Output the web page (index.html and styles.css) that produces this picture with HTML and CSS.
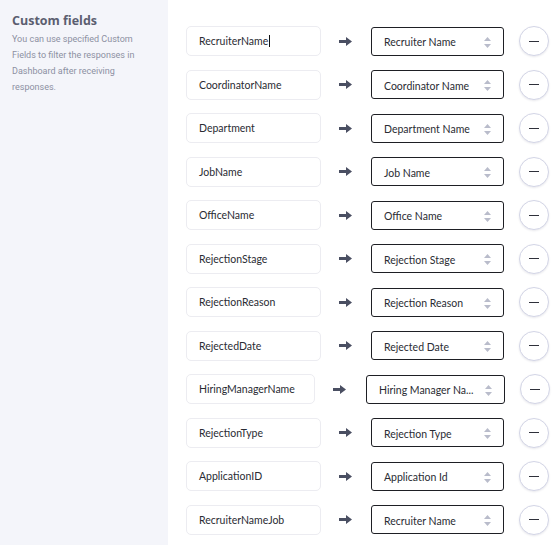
FILE: index.html
```html
<!DOCTYPE html>
<html>
<head>
<meta charset="utf-8">
<link rel="stylesheet" href="styles.css">
</head>
<body>
<div class="page">
  <aside class="side">
    <h2 class="title">Custom fields</h2>
    <p class="desc">You can use specified Custom Fields to filter the responses in Dashboard after receiving responses.</p>
  </aside>
  <main class="main">
    <div class="rows">
      <div class="row"><div class="field">RecruiterName<span class="cursor"></span></div><svg class="arrow" viewBox="0 0 13 9"><path d="M0 3h7V0l6 4.5L7 9V6H0z"/></svg><div class="select"><span>Recruiter Name</span><svg class="caret" viewBox="0 0 7 11"><path d="M3.5 0L7 4H0zM3.5 11L0 7h7z"/></svg></div><button class="remove"><span></span></button></div>
      <div class="row"><div class="field">CoordinatorName</div><svg class="arrow" viewBox="0 0 13 9"><path d="M0 3h7V0l6 4.5L7 9V6H0z"/></svg><div class="select"><span>Coordinator Name</span><svg class="caret" viewBox="0 0 7 11"><path d="M3.5 0L7 4H0zM3.5 11L0 7h7z"/></svg></div><button class="remove"><span></span></button></div>
      <div class="row"><div class="field">Department</div><svg class="arrow" viewBox="0 0 13 9"><path d="M0 3h7V0l6 4.5L7 9V6H0z"/></svg><div class="select"><span>Department Name</span><svg class="caret" viewBox="0 0 7 11"><path d="M3.5 0L7 4H0zM3.5 11L0 7h7z"/></svg></div><button class="remove"><span></span></button></div>
      <div class="row"><div class="field">JobName</div><svg class="arrow" viewBox="0 0 13 9"><path d="M0 3h7V0l6 4.5L7 9V6H0z"/></svg><div class="select"><span>Job Name</span><svg class="caret" viewBox="0 0 7 11"><path d="M3.5 0L7 4H0zM3.5 11L0 7h7z"/></svg></div><button class="remove"><span></span></button></div>
      <div class="row"><div class="field">OfficeName</div><svg class="arrow" viewBox="0 0 13 9"><path d="M0 3h7V0l6 4.5L7 9V6H0z"/></svg><div class="select"><span>Office Name</span><svg class="caret" viewBox="0 0 7 11"><path d="M3.5 0L7 4H0zM3.5 11L0 7h7z"/></svg></div><button class="remove"><span></span></button></div>
      <div class="row"><div class="field">RejectionStage</div><svg class="arrow" viewBox="0 0 13 9"><path d="M0 3h7V0l6 4.5L7 9V6H0z"/></svg><div class="select"><span>Rejection Stage</span><svg class="caret" viewBox="0 0 7 11"><path d="M3.5 0L7 4H0zM3.5 11L0 7h7z"/></svg></div><button class="remove"><span></span></button></div>
      <div class="row"><div class="field">RejectionReason</div><svg class="arrow" viewBox="0 0 13 9"><path d="M0 3h7V0l6 4.5L7 9V6H0z"/></svg><div class="select"><span>Rejection Reason</span><svg class="caret" viewBox="0 0 7 11"><path d="M3.5 0L7 4H0zM3.5 11L0 7h7z"/></svg></div><button class="remove"><span></span></button></div>
      <div class="row"><div class="field">RejectedDate</div><svg class="arrow" viewBox="0 0 13 9"><path d="M0 3h7V0l6 4.5L7 9V6H0z"/></svg><div class="select"><span>Rejected Date</span><svg class="caret" viewBox="0 0 7 11"><path d="M3.5 0L7 4H0zM3.5 11L0 7h7z"/></svg></div><button class="remove"><span></span></button></div>
      <div class="row row-wide"><div class="field">HiringManagerName</div><svg class="arrow" viewBox="0 0 13 9"><path d="M0 3h7V0l6 4.5L7 9V6H0z"/></svg><div class="select"><span>Hiring Manager Na...</span><svg class="caret" viewBox="0 0 7 11"><path d="M3.5 0L7 4H0zM3.5 11L0 7h7z"/></svg></div><button class="remove"><span></span></button></div>
      <div class="row"><div class="field">RejectionType</div><svg class="arrow" viewBox="0 0 13 9"><path d="M0 3h7V0l6 4.5L7 9V6H0z"/></svg><div class="select"><span>Rejection Type</span><svg class="caret" viewBox="0 0 7 11"><path d="M3.5 0L7 4H0zM3.5 11L0 7h7z"/></svg></div><button class="remove"><span></span></button></div>
      <div class="row"><div class="field">ApplicationID</div><svg class="arrow" viewBox="0 0 13 9"><path d="M0 3h7V0l6 4.5L7 9V6H0z"/></svg><div class="select"><span>Application Id</span><svg class="caret" viewBox="0 0 7 11"><path d="M3.5 0L7 4H0zM3.5 11L0 7h7z"/></svg></div><button class="remove"><span></span></button></div>
      <div class="row"><div class="field">RecruiterNameJob</div><svg class="arrow" viewBox="0 0 13 9"><path d="M0 3h7V0l6 4.5L7 9V6H0z"/></svg><div class="select"><span>Recruiter Name</span><svg class="caret" viewBox="0 0 7 11"><path d="M3.5 0L7 4H0zM3.5 11L0 7h7z"/></svg></div><button class="remove"><span></span></button></div>
    </div>
  </main>
</div>
</body>
</html>
```

FILE: styles.css
```css
* { box-sizing: border-box; }
html, body { margin: 0; padding: 0; background: #fff; }
body { font-family: "Lato", "Liberation Sans", sans-serif; }

.page {
  display: flex;
  width: 558px;
  height: 545px;
  overflow: hidden;
}

.side {
  width: 168px;
  flex: none;
  background: #f4f5fa;
  padding: 13px 28px 0 12px;
}

.title {
  margin: 0;
  font-family: "Open Sans", "Liberation Sans", sans-serif;
  font-weight: 700;
  font-size: 12.5px;
  line-height: 16px;
  color: #5b5e70;
}

.desc {
  margin: 2px 0 0;
  font-family: "Roboto", "Liberation Sans", sans-serif;
  font-size: 9px;
  line-height: 16px;
  color: #8c90a2;
}

.main {
  flex: 1;
  padding: 26px 0 0 18px;
}

.rows {
  display: flex;
  flex-direction: column;
  gap: 13.5px;
}

.row {
  display: flex;
  align-items: center;
  height: 30px;
}

.field {
  width: 135px;
  height: 30px;
  border: 1px solid #ececf1;
  border-radius: 5px;
  padding: 0 0 0 12px;
  display: flex;
  align-items: center;
  font-size: 10.5px;
  color: #2a2c33;
}

.cursor {
  display: inline-block;
  width: 1px;
  height: 12px;
  background: #111;
  margin-left: 1px;
}

.arrow {
  width: 13px;
  height: 9px;
  margin: 0 19px 0 18px;
  fill: #4a4f62;
  flex: none;
}

.select {
  width: 133px;
  height: 29px;
  border: 1px solid #1e1f24;
  border-radius: 3px;
  display: flex;
  align-items: center;
  justify-content: space-between;
  padding: 2px 12px 0 12px;
  font-size: 10.5px;
  color: #2a2c33;
}

.caret {
  width: 7px;
  height: 11px;
  fill: #b9bccb;
  flex: none;
}

.remove {
  margin-left: 15px;
  width: 30px;
  height: 30px;
  border-radius: 50%;
  border: 1px solid #d3d5e6;
  background: #fff;
  box-shadow: 0 1px 2px rgba(40, 44, 80, 0.1);
  padding: 0;
  display: flex;
  align-items: center;
  justify-content: center;
  flex: none;
}

.remove span {
  display: block;
  width: 10px;
  height: 1px;
  background: #2e303a;
}

.row-wide .field { width: 129px; }
.row-wide .arrow { margin: 0 20px 0 18px; }
.row-wide .select { width: 139px; }
```
